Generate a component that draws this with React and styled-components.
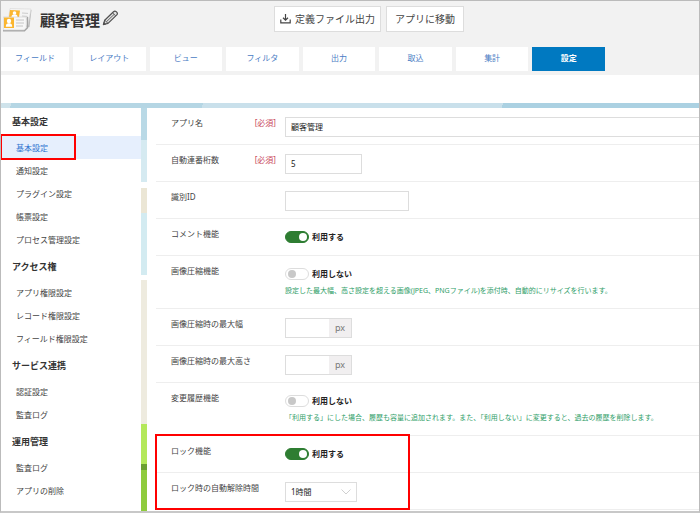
import { useState } from "react";
import styled, { createGlobalStyle, css } from "styled-components";

const tabs = ["フィールド", "レイアウト", "ビュー", "フィルタ", "出力", "取込", "集計", "設定"];

const menu = [
  { title: "基本設定", items: ["基本設定", "通知設定", "プラグイン設定", "帳票設定", "プロセス管理設定"] },
  { title: "アクセス権", items: ["アプリ権限設定", "レコード権限設定", "フィールド権限設定"] },
  { title: "サービス連携", items: ["認証設定", "監査ログ"] },
  { title: "運用管理", items: ["監査ログ", "アプリの削除"] },
];

const ContactsIcon = () => (
  <svg width="29" height="24" viewBox="0 0 29 24" aria-hidden="true">
    <path d="M7 1 28.500 2 26.500 19 22 20 6 17z" fill="#bdbdbd" />
    <path d="M7 .5 28 1 25 17.500 5 15z" fill="#f4f4f4" stroke="#d6d6d6" strokeWidth=".6" />
    <path d="M7 2 17 2.500 16 9 6 9z" fill="#fbb62f" />
    <circle cx="11.500" cy="5" r="1.800" fill="#fff" />
    <path d="M8.500 9c0-2 1-2.500 3-2.500s3 .5 3 2.500z" fill="#fff" />
    <path d="M19 5l6 .4M19 8l5.500.4M23 11l1.500.1" stroke="#ccc" strokeWidth="1" />
    <path d="M0 22.800h21.500l3-3V9" fill="none" stroke="#a5a5a5" strokeWidth="1.400" />
    <path d="M.3 9h23v10.500L21 22H.3z" fill="#f7f7f7" stroke="#cfcfcf" strokeWidth=".6" />
    <path d="M1 9.500h10v10.500H1z" fill="#fbb62f" />
    <circle cx="6" cy="13" r="2.200" fill="#fff" />
    <path d="M2.800 18.700c0-2 .8-3.200 2.200-3.500h2c1.400.3 2.200 1.500 2.200 3.500z" fill="#fff" />
    <path d="M13 12h8M13 15h8M13 18h7" stroke="#c6c6c6" strokeWidth="1" />
  </svg>
);

const PencilIcon = () => (
  <svg width="17" height="16" viewBox="0 0 17 16" fill="none" stroke="#505050" strokeLinejoin="round" aria-hidden="true">
    <path d="M1.500 14.500l1.200-4.300L11.500 1.700c.9-.8 1.700-.9 2.700-.1l.7.700c.7.9.6 1.800-.1 2.600L6 13.400z" fill="#e2e2e2" strokeWidth="1.200" />
    <path d="M2.800 10.300L6 13.300M10.500 2.800l3.200 3M4.500 11.700l7.600-7.300" strokeWidth=".9" />
    <path d="M1.300 14.800l.6-2.300 1.700 1.600z" fill="#505050" />
  </svg>
);

const DownloadIcon = () => (
  <svg width="11" height="10" viewBox="0 0 11 10" fill="none" stroke="#444" strokeWidth="1.200" aria-hidden="true">
    <path d="M5.500 0v6M3 3.800l2.500 2.400L8 3.800M.8 5.500v3.300h9.400V5.500" />
  </svg>
);

const Switch = ({ id, initial }) => {
  const [on, setOn] = useState(initial);
  return (
    <SwitchLabel>
      <Toggle id={id} type="checkbox" checked={on} onChange={() => setOn(!on)} />
      <span>{on ? "利用する" : "利用しない"}</span>
    </SwitchLabel>
  );
};

const PixelInput = ({ id }) => (
  <PixelGroup>
    <input id={id} type="text" />
    <span>px</span>
  </PixelGroup>
);

const Field = ({ id, label, required, children }) => (
  <Row>
    <Label htmlFor={id}>
      {label}
      {required && <Required>[必須]</Required>}
    </Label>
    <Control>{children}</Control>
  </Row>
);

const App = () => {
  const [tab, setTab] = useState("設定");
  const [period, setPeriod] = useState("1");

  return (
    <Page>
      <GlobalStyle />
      <Header>
        <TitleBar>
          <AppTitle>
            <ContactsIcon />
            <h1>顧客管理</h1>
            <IconButton type="button" aria-label="編集">
              <PencilIcon />
            </IconButton>
          </AppTitle>
          <HeaderButton type="button">
            <DownloadIcon />
            定義ファイル出力
          </HeaderButton>
          <HeaderButton type="button">アプリに移動</HeaderButton>
        </TitleBar>
        <Tabs>
          {tabs.map((name) => (
            <Tab key={name} type="button" $active={name === tab} onClick={() => setTab(name)}>
              {name}
            </Tab>
          ))}
        </Tabs>
      </Header>
      <Band />
      <Sky />
      <Body>
        <Sidebar>
          {menu.map((group, g) => (
            <section key={group.title}>
              <GroupTitle>{group.title}</GroupTitle>
              <MenuList>
                {group.items.map((item, i) => {
                  const current = g === 0 && i === 0;
                  return (
                    <li key={item}>
                      <MenuLink href="#" $current={current}>
                        {item}
                      </MenuLink>
                      {current && <MenuMarker />}
                    </li>
                  );
                })}
              </MenuList>
            </section>
          ))}
        </Sidebar>
        <Main>
          <Field id="name" label="アプリ名" required>
            <TextInput id="name" type="text" defaultValue="顧客管理" $wide />
          </Field>
          <Field id="digits" label="自動連番桁数" required>
            <TextInput id="digits" type="text" defaultValue="5" $width={77} />
          </Field>
          <Field id="ident" label="識別ID">
            <TextInput id="ident" type="text" $width={124} />
          </Field>
          <Field id="comment" label="コメント機能">
            <Switch id="comment" initial={true} />
          </Field>
          <Field id="compress" label="画像圧縮機能">
            <Switch id="compress" initial={false} />
            <Hint>
              設定した最大幅、高さ設定を超える画像(JPEG、PNGファイル)を添付時、自動的にリサイズを行います。
            </Hint>
          </Field>
          <Field id="maxw" label="画像圧縮時の最大幅">
            <PixelInput id="maxw" />
          </Field>
          <Field id="maxh" label="画像圧縮時の最大高さ">
            <PixelInput id="maxh" />
          </Field>
          <Field id="history" label="変更履歴機能">
            <Switch id="history" initial={false} />
            <Hint>
              「利用する」にした場合、履歴も容量に追加されます。また、「利用しない」に変更すると、過去の履歴を削除します。
            </Hint>
          </Field>
          <LockRows>
            <Field id="lock" label="ロック機能">
              <Switch id="lock" initial={true} />
            </Field>
            <Field id="period" label="ロック時の自動解除時間">
              <SelectBox>
                <select id="period" value={period} onChange={(e) => setPeriod(e.target.value)}>
                  <option value="1">1時間</option>
                  <option value="2">2時間</option>
                  <option value="3">3時間</option>
                </select>
                <svg width="10" height="6" viewBox="0 0 10 6" fill="none" stroke="#d0d0d0" aria-hidden="true">
                  <path d="M.5.5 5 5 9.500.5" />
                </svg>
              </SelectBox>
            </Field>
            <LockMarker />
          </LockRows>
        </Main>
      </Body>
    </Page>
  );
};

const GlobalStyle = createGlobalStyle`
  * {
    box-sizing: border-box;
  }
  body {
    margin: 0;
    background: #fff;
    color: #444;
    font-family: "Noto Sans", "Noto Sans CJK JP", sans-serif;
    font-size: 8px;
    line-height: 12px;
  }
  button, input, select {
    font: inherit;
    color: inherit;
    margin: 0;
  }
  h1, h2, ul {
    margin: 0;
    padding: 0;
  }
`
const Page = styled.div`
  min-height: 100vh;
  display: flex;
  flex-direction: column;
  border: 1px solid #bbb;
  border-bottom: 2px solid #c8c8c8;
  overflow: hidden;
`
const Header = styled.header`
  background: #f2f2f2;
  padding-bottom: 4px;
`
const TitleBar = styled.div`
  display: flex;
  align-items: flex-start;
  gap: 5px;
  padding: 5px 0 14px 2px;
`
const AppTitle = styled.div`
  display: flex;
  align-items: center;
  flex: 0 0 266px;
  padding-top: 2px;
  h1 {
    margin: 0 2px 0 8px;
    font-size: 15px;
    line-height: 20px;
    color: #333;
  }
`
const IconButton = styled.button`
  display: flex;
  padding: 0 0 4px;
  border: none;
  background: none;
  cursor: pointer;
`
const HeaderButton = styled.button`
  display: flex;
  align-items: center;
  justify-content: center;
  gap: 4px;
  min-width: 78px;
  height: 26px;
  padding: 0 5px;
  border: 1px solid #ddd;
  background: #fff;
  font-size: 10px;
  white-space: nowrap;
  cursor: pointer;
`
const Tabs = styled.nav`
  display: grid;
  grid-template-columns: 68px repeat(7, 1fr);
  gap: 4px;
  max-width: 604px;
  padding-top: 1px;
`
const Tab = styled.button`
  height: 24px;
  padding: 0 0 3px;
  border: none;
  background: #fff;
  color: #4a7cc4;
  cursor: pointer;
  ${(p) => p.$active && css`
    background: #0079c1;
    color: #fff;
    font-weight: 700;
  `}
`
const Band = styled.div`
  height: 28px;
  background: #fff;
`
const Sky = styled.div`
  height: 5px;
  background: linear-gradient(110deg, #cfe3eb 10px, #b5d6e4 10px 190px, #c9e0eb 190px 472px, #abd1e2 472px);
`
const Body = styled.div`
  flex: 1;
  display: flex;
  gap: 6px;
  background: linear-gradient(
    #b9d9e6 32px, #d5eaf1 32px 74px, #fff 74px 80px, #ebe6d5 80px 105px, #d3ebf1 105px 167px,
    #fff 167px 172px, #eeebdf 172px 316px, #b4e85a 316px 356px, #6b9f31 356px 362px, #8ecb3d 362px
  );
`
const Sidebar = styled.aside`
  flex: 0 0 140px;
  background: #fff;
`
const GroupTitle = styled.h2`
  padding-left: 11px;
  font-size: 9px;
  line-height: 28px;
  color: #333;
`
const MenuList = styled.ul`
  list-style: none;
  margin-bottom: 2px;
  li {
    position: relative;
  }
`
const MenuLink = styled.a`
  display: block;
  padding-left: 15px;
  line-height: 23px;
  text-decoration: none;
  color: ${(p) => (p.$current ? "#2f74d0" : "#444")};
  background: ${(p) => (p.$current ? "#e6effd" : "none")};
`
const MenuMarker = styled.span`
  position: absolute;
  top: -2px;
  left: -1px;
  width: 76px;
  height: 26px;
  border: 2px solid #f00;
  pointer-events: none;
`
const Main = styled.main`
  flex: 1;
  min-width: 0;
  padding-left: 9px;
  background: #fff;
`
const Row = styled.div`
  display: flex;
  align-items: flex-start;
  min-height: 37px;
  padding: 9px 0 7px 15px;
  border-bottom: 1px solid #eee;
`
const Label = styled.label`
  flex: 0 0 105px;
  display: flex;
  justify-content: space-between;
  margin-right: 9px;
  white-space: nowrap;
`
const Required = styled.span`
  color: #c9485b;
`
const Control = styled.div`
  flex: 1;
  min-width: 0;
`
const TextInput = styled.input`
  display: block;
  width: ${(p) => (p.$wide ? "100%" : `${p.$width}px`)};
  height: 20px;
  padding: 0 5px 2px;
  border: 1px solid #ddd;
  border-right-width: ${(p) => (p.$wide ? "0" : "1px")};
  background: #fff;
  color: #222;
`
const SwitchLabel = styled.label`
  display: flex;
  align-items: center;
  gap: 3px;
  padding-top: 3px;
  font-weight: 700;
  color: #222;
`
const Toggle = styled.input`
  appearance: none;
  width: 24px;
  height: 12px;
  margin: 0;
  padding: 1px;
  border: 1px solid #ddd;
  border-radius: 6px;
  background: #fff;
  cursor: pointer;
  &::before {
    content: "";
    display: block;
    width: 8px;
    height: 8px;
    margin-left: 1px;
    border-radius: 50%;
    background: #c8c8c8;
  }
  &:checked {
    border-color: #2e7d32;
    background: #2e7d32;
  }
  &:checked::before {
    margin-left: 12px;
    background: #fff;
  }
`
const Hint = styled.p`
  margin: 5px 0 4px;
  font-size: 7px;
  line-height: 12px;
  color: #2f9e68;
`
const PixelGroup = styled.div`
  display: flex;
  width: 67px;
  height: 20px;
  border: 1px solid #ddd;
  background: #f1eff0;
  input {
    flex: 1;
    min-width: 0;
    padding: 0 5px;
    border: none;
    background: #fff;
  }
  span {
    flex: 0 0 22px;
    font-size: 9px;
    line-height: 17px;
    text-align: center;
    color: #777;
  }
`
const LockRows = styled.div`
  position: relative;
`
const LockMarker = styled.span`
  position: absolute;
  top: -2px;
  bottom: 0;
  left: -1px;
  width: 255px;
  border: 2px solid #f00;
  pointer-events: none;
`
const SelectBox = styled.div`
  position: relative;
  width: 72px;
  select {
    display: block;
    appearance: none;
    width: 100%;
    height: 20px;
    padding: 0 20px 0 5px;
    border: 1px solid #ddd;
    border-radius: 0;
    background: #fff;
    color: #222;
  }
  svg {
    position: absolute;
    right: 6px;
    top: 7px;
    pointer-events: none;
  }
`
export default App
